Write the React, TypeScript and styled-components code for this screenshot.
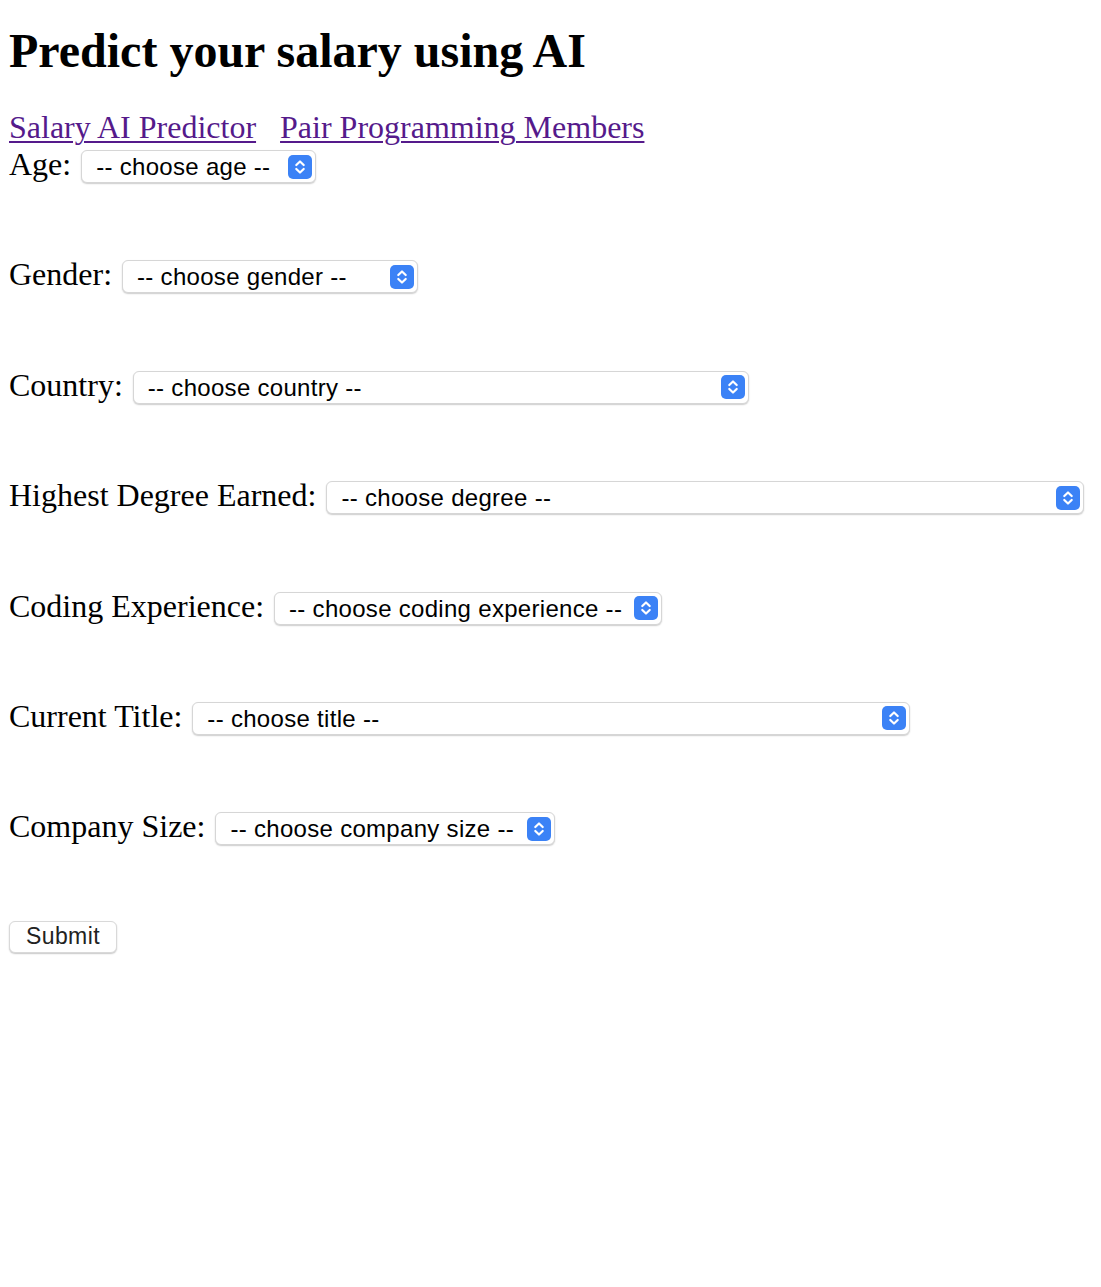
import React from "react";
import styled, { createGlobalStyle } from "styled-components";

const GlobalStyle = createGlobalStyle`
  html, body {
    margin: 0;
    padding: 0;
    background: #ffffff;
  }
  body {
    font-family: "Liberation Serif", "Times New Roman", serif;
    color: #000;
  }
`;

const Page = styled.div`
  padding: 8px 8px 8px 9px;
  font-family: "Liberation Serif", "Times New Roman", serif;
  font-size: 32px;
  line-height: 36.8px;
`;

const Title = styled.h1`
  margin: 15px 0 31px;
  font-size: 48px;
  line-height: 55.2px;
  font-weight: bold;
`;

const Nav = styled.nav`
  display: flex;
  gap: 24px;
  height: 36.8px;
`;

const NavLink = styled.a`
  color: #551a8b;
  text-decoration: underline;
  text-underline-offset: 3px;
  text-decoration-thickness: 2px;
`;

const Form = styled.form`
  display: flex;
  flex-direction: column;
  gap: 73.6px;
`;

const Row = styled.div`
  display: flex;
  align-items: baseline;
  height: 36.8px;
`;

const Label = styled.label`
  margin-right: 10px;
  white-space: nowrap;
`;

const SelectWrap = styled.span<{ $w: number }>`
  position: relative;
  display: inline-flex;
  width: ${(p) => p.$w}px;
`;

const Select = styled.select`
  appearance: none;
  -webkit-appearance: none;
  width: 100%;
  height: 33px;
  box-sizing: border-box;
  margin: 0;
  padding: 0 34px 0 14px;
  border: 1px solid #d6d6d6;
  border-radius: 6px;
  background: #ffffff;
  box-shadow: 0 1px 1.5px rgba(0, 0, 0, 0.2);
  font-family: "Liberation Sans", Arial, sans-serif;
  font-size: 24px;
  letter-spacing: 0.3px;
  color: #000;
  outline: none;
`;

const Arrow = styled.svg`
  position: absolute;
  right: 4px;
  top: 50%;
  transform: translateY(-50%);
  width: 24px;
  height: 24px;
  pointer-events: none;
`;

const SubmitRow = styled.div`
  display: flex;
  height: 36.8px;
  padding-top: 2px;
  box-sizing: border-box;
`;

const SubmitButton = styled.button`
  height: 32px;
  padding: 0 16px;
  border: 1px solid #d9d9d9;
  border-radius: 6px;
  background: #ffffff;
  box-shadow: 0 1px 1.5px rgba(0, 0, 0, 0.22);
  font-family: "Liberation Sans", Arial, sans-serif;
  font-size: 23px;
  letter-spacing: 0.4px;
  color: #222;
  cursor: pointer;
`;

const ArrowIcon = () => (
  <Arrow viewBox="0 0 24 24">
    <rect x="0" y="0" width="24" height="24" rx="5" fill="#3b82f6" />
    <path
      d="M8.3 10 L12 6.5 L15.7 10"
      fill="none"
      stroke="#fff"
      strokeWidth="2.2"
      strokeLinecap="round"
      strokeLinejoin="round"
    />
    <path
      d="M8.3 14 L12 17.5 L15.7 14"
      fill="none"
      stroke="#fff"
      strokeWidth="2.2"
      strokeLinecap="round"
      strokeLinejoin="round"
    />
  </Arrow>
);

type Field = { id: string; label: string; placeholder: string; width: number };

const fields: Field[] = [
  { id: "age", label: "Age:", placeholder: "-- choose age --", width: 235 },
  { id: "gender", label: "Gender:", placeholder: "-- choose gender --", width: 296 },
  { id: "country", label: "Country:", placeholder: "-- choose country --", width: 616 },
  { id: "degree", label: "Highest Degree Earned:", placeholder: "-- choose degree --", width: 758 },
  { id: "coding", label: "Coding Experience:", placeholder: "-- choose coding experience --", width: 388 },
  { id: "title", label: "Current Title:", placeholder: "-- choose title --", width: 718 },
  { id: "company", label: "Company Size:", placeholder: "-- choose company size --", width: 340 },
];

export default function App() {
  return (
    <>
      <GlobalStyle />
      <Page>
        <Title>Predict your salary using AI</Title>
        <Nav>
          <NavLink href="#">Salary AI Predictor</NavLink>
          <NavLink href="#">Pair Programming Members</NavLink>
        </Nav>
        <Form onSubmit={(e) => e.preventDefault()}>
          {fields.map((f) => (
            <Row key={f.id}>
              <Label htmlFor={f.id}>{f.label}</Label>
              <SelectWrap $w={f.width}>
                <Select id={f.id} defaultValue="">
                  <option value="">{f.placeholder}</option>
                </Select>
                <ArrowIcon />
              </SelectWrap>
            </Row>
          ))}
          <SubmitRow>
            <SubmitButton type="submit">Submit</SubmitButton>
          </SubmitRow>
        </Form>
      </Page>
    </>
  );
}
